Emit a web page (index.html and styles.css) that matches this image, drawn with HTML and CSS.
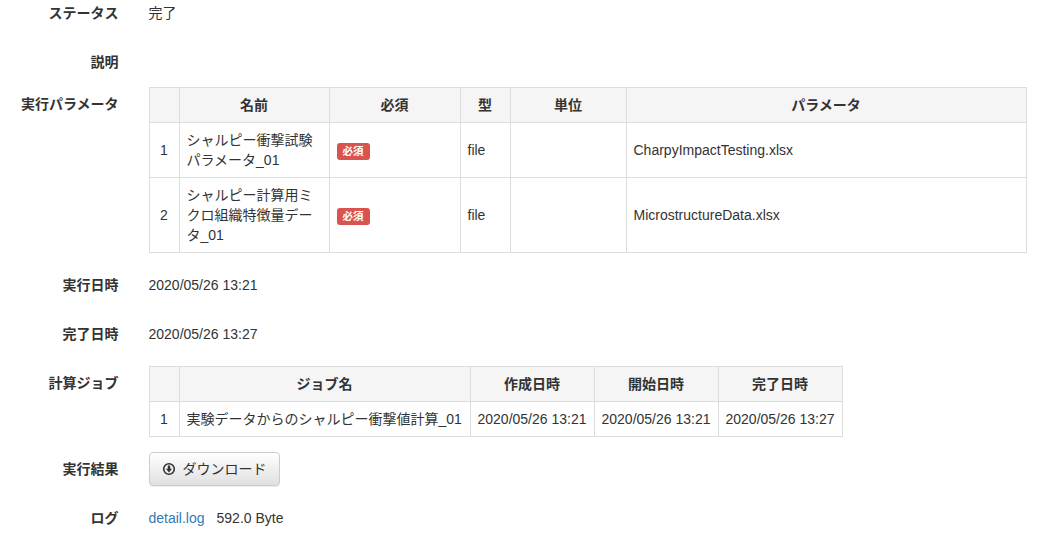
FILE: index.html
```html
<!DOCTYPE html>
<html lang="ja">
<head>
<meta charset="utf-8">
<title>実行詳細</title>
<link rel="stylesheet" href="styles.css">
</head>
<body>
<main class="detail">
  <div class="row"><div class="label">ステータス</div><div class="value">完了</div></div>
  <div class="row"><div class="label">説明</div></div>
  <div class="row">
    <div class="label">実行パラメータ</div>
    <table class="grid grid-params">
      <colgroup><col class="p1"><col class="p2"><col class="p3"><col class="p4"><col class="p5"><col class="p6"></colgroup>
      <thead><tr><th></th><th>名前</th><th>必須</th><th>型</th><th>単位</th><th>パラメータ</th></tr></thead>
      <tbody>
        <tr><td class="idx">1</td><td>シャルピー衝撃試験パラメータ_01</td><td><span class="badge">必須</span></td><td>file</td><td></td><td>CharpyImpactTesting.xlsx</td></tr>
        <tr><td class="idx">2</td><td>シャルピー計算用ミクロ組織特徴量データ_01</td><td><span class="badge">必須</span></td><td>file</td><td></td><td>MicrostructureData.xlsx</td></tr>
      </tbody>
    </table>
  </div>
  <div class="row"><div class="label">実行日時</div><div class="value">2020/05/26 13:21</div></div>
  <div class="row"><div class="label">完了日時</div><div class="value">2020/05/26 13:27</div></div>
  <div class="row">
    <div class="label">計算ジョブ</div>
    <table class="grid grid-jobs">
      <colgroup><col class="j1"><col class="j2"><col class="j3"><col class="j3"><col class="j3"></colgroup>
      <thead><tr><th></th><th>ジョブ名</th><th>作成日時</th><th>開始日時</th><th>完了日時</th></tr></thead>
      <tbody>
        <tr><td class="idx">1</td><td>実験データからのシャルピー衝撃値計算_01</td><td>2020/05/26 13:21</td><td>2020/05/26 13:21</td><td>2020/05/26 13:27</td></tr>
      </tbody>
    </table>
  </div>
  <div class="row">
    <div class="label">実行結果</div>
    <button class="btn" type="button">
      <svg class="icon" viewBox="0 0 14 14" aria-hidden="true">
        <circle cx="7" cy="7" r="5.3" fill="none" stroke="#333" stroke-width="1.6"/>
        <path d="M5.8 3.5h2.4v3.2h1.9L7 10.5 3.9 6.7h1.9z" fill="#333"/>
      </svg>
      <span>ダウンロード</span>
    </button>
  </div>
  <div class="row"><div class="label">ログ</div><div class="value"><a class="link" href="#">detail.log</a><span class="size">592.0 Byte</span></div></div>
</main>
</body>
</html>
```
FILE: styles.css
```css
* { box-sizing: border-box; }
html, body { margin: 0; padding: 0; background: #fff; overflow: hidden; }
body {
  font-family: "Liberation Sans", "Noto Sans CJK JP", sans-serif;
  font-size: 14px;
  line-height: 20px;
  color: #333;
}
.detail {
  display: flex;
  flex-direction: column;
  gap: 15px;
  margin-top: -4px;
  padding-right: 14px;
}
.row { display: flex; align-items: flex-start; gap: 30px; }
.label {
  flex: 0 0 118.5px;
  padding-top: 7px;
  text-align: right;
  font-weight: 700;
}
.value { padding: 7px 0; min-height: 34px; }
.grid { border-collapse: collapse; table-layout: fixed; }
.grid-params { width: 877px; }
.grid-jobs { width: 694px; }
.grid th, .grid td {
  border: 1px solid #ddd;
  padding: 7px;
  vertical-align: middle;
  text-align: left;
  font-weight: 400;
}
.grid th { background: #f5f5f5; text-align: center; font-weight: 700; }
.grid td.idx { text-align: center; }
.p1 { width: 30px; }
.p2 { width: 150px; }
.p3 { width: 131px; }
.p4 { width: 50px; }
.p5 { width: 116px; }
.p6 { width: 400px; }
.j1 { width: 30px; }
.j2 { width: 291px; }
.j3 { width: 124px; }
.badge {
  display: inline-block;
  padding: 2px 6px 3px;
  font-size: 10.5px;
  line-height: 12px;
  font-weight: 700;
  color: #fff;
  background: #d9534f;
  border-radius: 3px;
  vertical-align: middle;
}
.btn {
  display: inline-flex;
  align-items: center;
  gap: 7px;
  height: 34px;
  width: 131px;
  padding: 0 12px;
  font: inherit;
  color: #333;
  background: linear-gradient(to bottom, #fff 0%, #e0e0e0 100%);
  border: 1px solid #ccc;
  border-radius: 4px;
  box-shadow: inset 0 1px 0 rgba(255,255,255,.15), 0 1px 1px rgba(0,0,0,.075);
}
.icon { width: 14px; height: 14px; flex: none; }
.link { color: #337ab7; text-decoration: none; }
.size { margin-left: 12px; }
```
